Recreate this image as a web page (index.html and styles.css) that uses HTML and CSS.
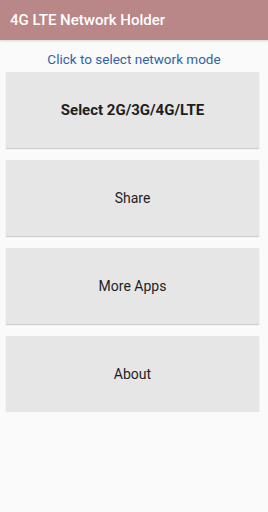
FILE: index.html
```html
<!DOCTYPE html>
<html>
<head>
<meta charset="utf-8">
<link rel="stylesheet" href="styles.css">
</head>
<body>
<header class="bar">4G LTE Network Holder</header>
<main class="content">
  <p class="hint">Click to select network mode</p>
  <div class="btn bold">Select 2G/3G/4G/LTE</div>
  <div class="btn">Share</div>
  <div class="btn">More Apps</div>
  <div class="btn">About</div>
</main>
</body>
</html>
```
FILE: styles.css
```css
html, body {
  margin: 0;
  padding: 0;
  background: #fafafa;
  font-family: Roboto, "Noto Sans", sans-serif;
}
.bar {
  height: 40px;
  background: #b98787;
  color: #ffffff;
  font-weight: 500;
  font-size: 15px;
  display: flex;
  align-items: center;
  padding-left: 10px;
  box-shadow: 0 1px 2px rgba(0,0,0,0.15);
}
.content {
  display: flex;
  flex-direction: column;
  gap: 12px;
  padding: 0 9px 0 6px;
}
.hint {
  margin: 10px 0 -8px;
  text-align: center;
  color: #3262a4;
  font-size: 13.5px;
  line-height: 18px;
  padding-left: 3px;
}
.btn {
  height: 76px;
  background: #e6e6e6;
  display: flex;
  align-items: center;
  justify-content: center;
  font-size: 14px;
  color: #1e1e1e;
  box-shadow: 0 1px 1px rgba(0,0,0,0.18);
}
.bold {
  font-weight: 700;
  font-size: 15px;
}
```
